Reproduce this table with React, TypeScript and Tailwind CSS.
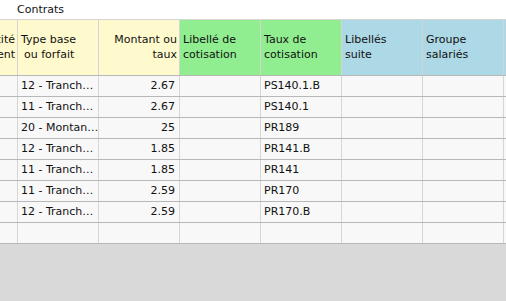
import React from "react";

const rows = [
  ["12 - Tranch…", "2.67", "", "PS140.1.B"],
  ["11 - Tranch…", "2.67", "", "PS140.1"],
  ["20 - Montan…", "25", "", "PR189"],
  ["12 - Tranch…", "1.85", "", "PR141.B"],
  ["11 - Tranch…", "1.85", "", "PR141"],
  ["11 - Tranch…", "2.59", "", "PR170"],
  ["12 - Tranch…", "2.59", "", "PR170.B"],
  ["", "", "", ""],
];

export default function App() {
  return (
    <div
      className="w-[506px] h-[301px] overflow-hidden bg-[#d9d9d9] text-[11px] text-[#111] flex flex-col"
      style={{ fontFamily: '"DejaVu Sans", sans-serif' }}
    >
      <div className="h-[20px] shrink-0 bg-white border-b border-[#d6d6d6] flex items-center pl-[17px] leading-[15px] pb-[1px]">
        Contrats
      </div>
      {/* header */}
      <div className="flex h-[56px] shrink-0 border-b border-[#b8b8b8] leading-[15px]">
        <div className="w-[18px] shrink-0 bg-[#fffacd] border-r border-[#d4d4d4] overflow-hidden flex flex-col justify-center items-end pr-[2px] pb-[2px] whitespace-nowrap">
          <div>Quantité</div>
          <div>Abattement</div>
        </div>
        <div className="w-[81px] shrink-0 bg-[#fffacd] border-r border-[#d4d4d4] flex flex-col justify-center pl-[3px] pb-[2px] whitespace-nowrap">
          <div>Type base</div>
          <div className="pl-[3px]">ou forfait</div>
        </div>
        <div className="w-[81px] shrink-0 bg-[#fffacd] border-r border-[#d4d4d4] flex flex-col justify-center items-end pr-[2px] pb-[2px] whitespace-nowrap">
          <div>Montant ou</div>
          <div>taux</div>
        </div>
        <div className="w-[81px] shrink-0 bg-[#90ee90] border-r border-[#d4d4d4] flex flex-col justify-center pl-[3px] pb-[2px] whitespace-nowrap">
          <div>Libellé de</div>
          <div>cotisation</div>
        </div>
        <div className="w-[81px] shrink-0 bg-[#90ee90] border-r border-[#d4d4d4] flex flex-col justify-center pl-[3px] pb-[2px] whitespace-nowrap">
          <div>Taux de</div>
          <div>cotisation</div>
        </div>
        <div className="w-[81px] shrink-0 bg-[#add8e6] border-r border-[#d4d4d4] flex flex-col justify-center pl-[3px] pb-[2px] whitespace-nowrap">
          <div>Libellés</div>
          <div>suite</div>
        </div>
        <div className="w-[81px] shrink-0 bg-[#add8e6] border-r border-[#d4d4d4] flex flex-col justify-center pl-[3px] pb-[2px] whitespace-nowrap">
          <div>Groupe</div>
          <div>salariés</div>
        </div>
        <div className="flex-1 bg-[#add8e6]" />
      </div>
      {/* body */}
      {rows.map((r, i) => (
        <div key={i} className="flex h-[21px] shrink-0 border-b border-[#b8b8b8] bg-[#f8f8f8] leading-[20px] whitespace-nowrap">
          <div className="w-[18px] shrink-0 border-r border-[#d6d6d6]" />
          <div className="w-[81px] shrink-0 border-r border-[#d6d6d6] pl-[3px] overflow-hidden">{r[0]}</div>
          <div className="w-[81px] shrink-0 border-r border-[#d6d6d6] pr-[4px] text-right">{r[1]}</div>
          <div className="w-[81px] shrink-0 border-r border-[#d6d6d6] pl-[3px]">{r[2]}</div>
          <div className="w-[81px] shrink-0 border-r border-[#d6d6d6] pl-[3px]">{r[3]}</div>
          <div className="w-[81px] shrink-0 border-r border-[#d6d6d6]" />
          <div className="w-[81px] shrink-0 border-r border-[#d6d6d6]" />
          <div className="flex-1" />
        </div>
      ))}
    </div>
  );
}
